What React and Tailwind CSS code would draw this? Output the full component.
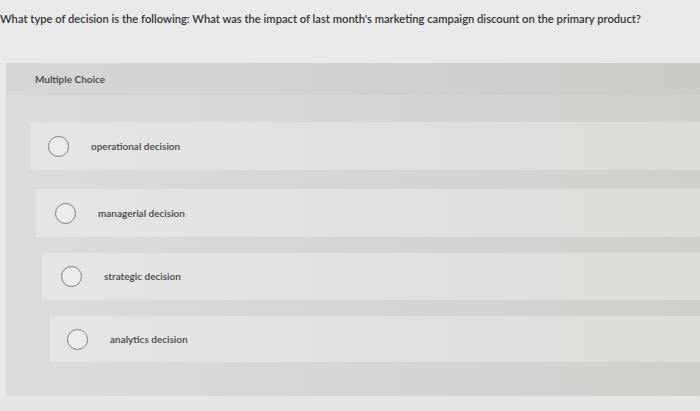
const options = [
  { label: "operational decision", card: "ml-[24px] mt-[27px] h-[48px]", inner: "pl-[18px]" },
  { label: "managerial decision", card: "ml-[30px] mt-[19px] h-[48px]", inner: "pl-[19px]" },
  { label: "strategic decision", card: "ml-[36px] mt-[16px] h-[47px]", inner: "pl-[19px]" },
  { label: "analytics decision", card: "ml-[44px] mt-[16px] h-[46px]", inner: "pl-[17px]" },
];

function Radio() {
  return <span className="h-[21px] w-[21px] shrink-0 rounded-full border-[1.5px] border-[#7c7d7f] bg-[#ececec]" />;
}

export default function App() {
  return (
    <div
      className="flex h-[411px] w-[700px] flex-col overflow-hidden bg-[#e9e9ea] text-[#3a3a3c]"
      style={{ fontFamily: "Lato, 'Open Sans', sans-serif" }}
    >
      <div className="h-[63px] pt-[11px]">
        <p className="whitespace-nowrap text-[11.2px] font-semibold text-[#333335]">
          What type of decision is the following: What was the impact of last month's marketing campaign discount on the primary product?
        </p>
      </div>

      <div className="ml-[6px] flex h-[333px] flex-col bg-linear-to-r from-[#dcdcdb] to-[#cfd0cc]">
        <div className="flex h-[32px] items-center bg-linear-to-r from-[#d7d6d6] to-[#cbccc8] pl-[29px] text-[10px] font-semibold text-[#3d3d3f]">
          Multiple Choice
        </div>
        {options.map((o) => (
          <div
            key={o.label}
            className={`${o.card} flex shrink-0 items-center bg-linear-to-r from-[#e5e5e4] to-[#dcddd9] ${o.inner}`}
          >
            <Radio />
            <span className="ml-[22px] text-[10px] font-semibold text-[#444446]">{o.label}</span>
          </div>
        ))}
      </div>
      <div className="flex-1 bg-[#e6e6e5]" />
    </div>
  );
}
